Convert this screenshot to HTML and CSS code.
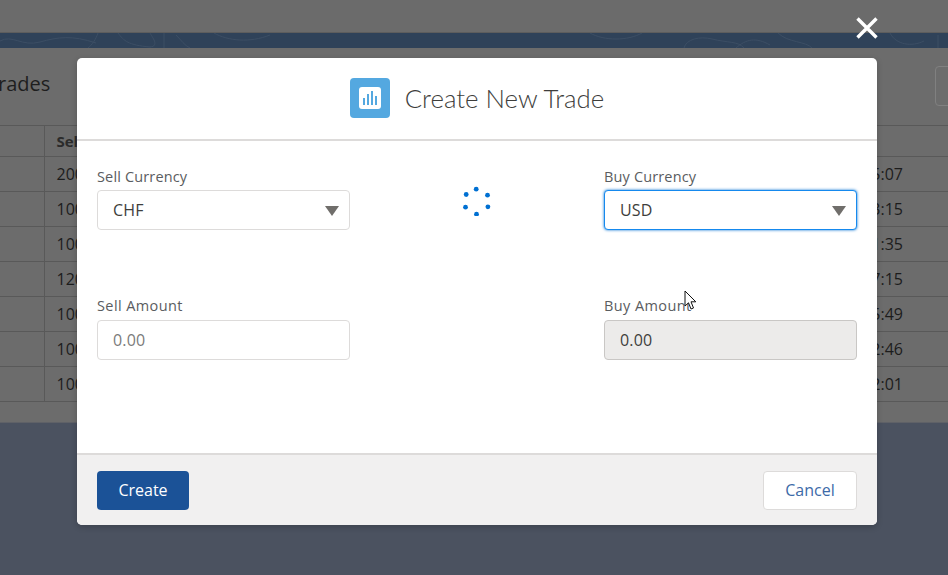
FILE: index.html
```html
<!DOCTYPE html>
<html lang="en">
<head>
    <meta charset="UTF-8">
    <meta name="viewport" content="width=device-width, initial-scale=1.0">
    <title>Create New Trade</title>
    <link rel="stylesheet" href="styles.css">
</head>
<body>

<div class="top-bar"></div>

<div class="band">
    <svg class="band-lines" width="948" height="15" viewBox="0 0 948 15" fill="none">
        <path d="M0 8C12 1 22 14 40 9S72 2 96 10M98 0C96 6 92 12 88 15M118 0C124 8 128 12 150 14C160 13 152 4 150 0M164 0V15M176 2C182 8 184 12 190 15M214 0C228 8 250 10 270 2M590 0C604 8 628 8 642 0M684 15C686 6 700 3 712 6C728 10 738 8 744 15M736 15C746 6 756 4 770 12M778 0C788 10 806 8 812 15M890 0C896 12 912 14 924 8M938 2V15" stroke="#3c4e64" stroke-width="1"/>
    </svg>
</div>

<div class="panel">
    <div class="panel-head">
        <h2 class="panel-title">Trades</h2>
        <div class="panel-btn"></div>
    </div>
    <table class="trades">
        <tr>
            <th class="col-first"></th>
            <th>Sell Amount</th>
            <th class="col-time"></th>
        </tr>
        <tr><td class="col-first"></td><td>200.00</td><td class="col-time">10:35:07</td></tr>
        <tr><td class="col-first"></td><td>100.00</td><td class="col-time">10:33:15</td></tr>
        <tr><td class="col-first"></td><td>100.00</td><td class="col-time">10:31:35</td></tr>
        <tr><td class="col-first"></td><td>120.00</td><td class="col-time">10:27:15</td></tr>
        <tr><td class="col-first"></td><td>100.00</td><td class="col-time">10:25:49</td></tr>
        <tr><td class="col-first"></td><td>100.00</td><td class="col-time">10:22:46</td></tr>
        <tr><td class="col-first"></td><td>100.00</td><td class="col-time">10:12:01</td></tr>
    </table>
</div>

<svg class="close-icon" width="24" height="24" viewBox="0 0 24 24">
    <path d="M2.5 2.5L21.5 21.5M21.5 2.5L2.5 21.5" stroke="#fff" stroke-width="3.4"/>
</svg>

<div class="modal">
    <div class="modal-header">
        <span class="trade-icon">
            <svg width="22" height="22" viewBox="0 0 22 22">
                <rect width="22" height="22" rx="3" fill="#fff"/>
                <rect x="4" y="11" width="2" height="7" fill="#54a8e0"/>
                <rect x="8" y="7" width="2" height="11" fill="#54a8e0"/>
                <rect x="12" y="4" width="2" height="14" fill="#54a8e0"/>
                <rect x="16" y="9" width="2" height="9" fill="#54a8e0"/>
            </svg>
        </span>
        <h1>Create New Trade</h1>
    </div>

    <div class="modal-body">
        <div class="field">
            <label for="sellCurrency">Sell Currency</label>
            <div class="select-wrap">
                <select id="sellCurrency"><option>CHF</option></select>
            </div>
        </div>

        <div class="spinner">
            <svg width="30" height="30" viewBox="0 0 30 30" fill="#0070d2">
                <circle cx="14.2" cy="3.2" r="2.4"/>
                <circle cx="25.5" cy="9.2" r="2.4"/>
                <circle cx="25.9" cy="20.8" r="2.4"/>
                <circle cx="14.5" cy="28.2" r="2.4"/>
                <circle cx="3.5" cy="21.2" r="2.4"/>
                <circle cx="4.2" cy="8.5" r="2.4"/>
            </svg>
        </div>

        <div class="field">
            <label for="buyCurrency">Buy Currency</label>
            <div class="select-wrap">
                <select id="buyCurrency" class="focused"><option>USD</option></select>
            </div>
        </div>

        <div class="field">
            <label class="label-low" for="sellAmount">Sell Amount</label>
            <input type="text" id="sellAmount" placeholder="0.00">
        </div>

        <div></div>

        <div class="field">
            <label class="label-low" for="buyAmount">Buy Amount</label>
            <input type="text" id="buyAmount" value="0.00" disabled>
        </div>
    </div>

    <div class="modal-footer">
        <button class="btn-create">Create</button>
        <button class="btn-cancel">Cancel</button>
    </div>
</div>

<svg class="cursor" width="13" height="21" viewBox="0 0 13 21">
    <path d="M1 1V16L4.5 12.8L7 19L9.5 18L7 11.8H11.8Z" fill="#fff" stroke="#111" stroke-width="1"/>
</svg>

</body>
</html>
```

FILE: styles.css
```css
* {
    box-sizing: border-box;
}
html, body {
    height: 100%;
}
body {
    margin: 0;
    position: relative;
    overflow: hidden;
    font-family: 'Open Sans', sans-serif;
    background: #4b5260;
}
.top-bar {
    height: 33px;
    background: #6b6b6b;
    border-bottom: 1px solid #5d5d5d;
}
.band {
    height: 15px;
    background: #2f4259;
}
.band-lines {
    display: block;
}
.panel {
    height: 375px;
    background: #6c6c6c;
    border-bottom: 1px solid #5f6167;
}
.panel-head {
    height: 77px;
    display: flex;
    align-items: center;
    justify-content: space-between;
}
.panel-title {
    margin: -7px 0 0 -13px;
    font-size: 20px;
    font-weight: 400;
    color: #1e1e1e;
}
.panel-btn {
    width: 40px;
    height: 40px;
    margin: -2px -27px 0 0;
    border: 1px solid #808080;
    border-radius: 4px;
}
.trades {
    width: 948px;
    table-layout: fixed;
    border-collapse: collapse;
    font-size: 16px;
    color: #1c1c1c;
}
.trades th, .trades td {
    height: 35px;
    padding: 0 12px;
    border-top: 1px solid #595959;
    border-bottom: 1px solid #595959;
    text-align: left;
    white-space: nowrap;
}
.trades th {
    height: 31px;
    font-size: 15px;
    font-weight: 700;
    color: #2b2b2b;
}
.col-first {
    width: 44px;
    border-right: 1px solid #595959;
}
.trades .col-time {
    width: 200px;
    padding-right: 45px;
    text-align: right;
}
.close-icon {
    position: absolute;
    left: 855px;
    top: 16px;
}
.modal {
    position: absolute;
    left: 77px;
    top: 58px;
    width: 800px;
    height: 467px;
    display: flex;
    flex-direction: column;
    background: #fff;
    border-radius: 5px;
    box-shadow: 0 2px 6px rgba(0, 0, 0, 0.2);
    overflow: hidden;
}
.modal-header {
    height: 83px;
    flex: none;
    display: flex;
    align-items: center;
    justify-content: center;
    gap: 15px;
    padding-bottom: 2px;
    border-bottom: 2px solid #dddbda;
}
.modal-header h1 {
    margin: 0;
    font-family: 'Lato', sans-serif;
    font-size: 25.8px;
    font-weight: 300;
    color: #3e3e3c;
}
.trade-icon {
    width: 40px;
    height: 40px;
    display: flex;
    align-items: center;
    justify-content: center;
    background: #54a8e0;
    border-radius: 4px;
}
.modal-body {
    flex: 1;
    display: grid;
    grid-template-columns: 253px 254px 253px;
    grid-template-rows: 129px 131px;
    padding: 26px 20px 0;
}
.field label {
    display: block;
    height: 23px;
    font-size: 14.5px;
    line-height: 20px;
    letter-spacing: 0.15px;
    color: #5a5c60;
}
.field .label-low {
    height: 24px;
    letter-spacing: 0.4px;
}
.select-wrap {
    position: relative;
}
.select-wrap::after {
    content: "";
    position: absolute;
    right: 11px;
    top: 16px;
    border-left: 7px solid transparent;
    border-right: 7px solid transparent;
    border-top: 10px solid #706e6b;
}
select, input {
    display: block;
    width: 100%;
    height: 40px;
    padding: 0 15px;
    border: 1px solid #dddbda;
    border-radius: 4px;
    background: #fff;
    font-family: inherit;
    font-size: 16px;
    letter-spacing: 0.2px;
    color: #3e3e3c;
    appearance: none;
    outline: none;
}
select.focused {
    border-color: #1589ee;
    box-shadow: 0 0 3px #0070d2;
}
input::placeholder {
    color: #7b7b7b;
    opacity: 1;
}
input:disabled {
    background: #ecebea;
    border-color: #c9c7c5;
    color: #3e3e3c;
    opacity: 1;
}
.spinner {
    display: flex;
    justify-content: center;
    padding-top: 19px;
}
.modal-footer {
    height: 72px;
    flex: none;
    display: flex;
    align-items: center;
    justify-content: space-between;
    padding: 1px 20px 0;
    background: #f1f0f0;
    border-top: 2px solid #dddbda;
}
button {
    height: 39px;
    padding: 0 0 2px;
    border-radius: 4px;
    font-family: inherit;
    font-size: 16px;
}
.btn-create {
    width: 92px;
    background: #1b5297;
    border: none;
    color: #fff;
}
.btn-cancel {
    width: 94px;
    background: #fff;
    border: 1px solid #dddbda;
    color: #3d6aa8;
}
.cursor {
    position: absolute;
    left: 684px;
    top: 290px;
}
```
